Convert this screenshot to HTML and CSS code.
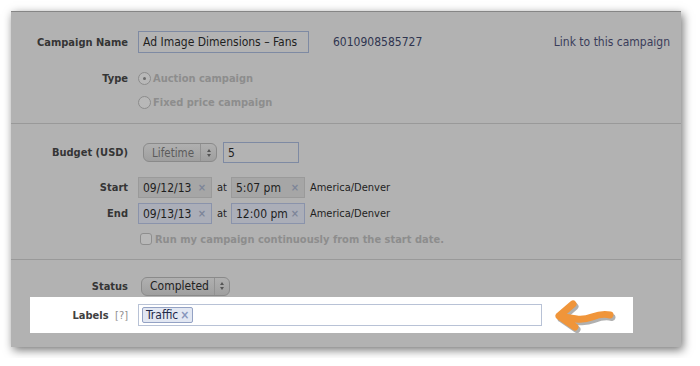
FILE: index.html
```html
<!DOCTYPE html>
<html lang="en">
<head>
    <meta charset="UTF-8">
    <title>Campaign settings</title>
    <link rel="stylesheet" href="styles.css">
</head>
<body>
    <div class="panel">
        <section class="group group-top">
            <div class="row row-name">
                <span class="lbl">Campaign Name</span>
                <div class="field name-field">Ad Image Dimensions – Fans</div>
                <span class="campaign-id">6010908585727</span>
                <a class="campaign-link">Link to this campaign</a>
            </div>
            <div class="row row-radio first-radio">
                <span class="lbl">Type</span>
                <span class="radio checked"></span>
                <span class="muted">Auction campaign</span>
            </div>
            <div class="row row-radio second-radio">
                <span class="lbl"></span>
                <span class="radio"></span>
                <span class="muted">Fixed price campaign</span>
            </div>
        </section>

        <section class="group group-dates">
            <div class="row row-budget">
                <span class="lbl">Budget (USD)</span>
                <div class="select select-budget">
                    <span class="select-text">Lifetime</span>
                    <span class="select-arrows"><i class="up"></i><i class="down"></i></span>
                </div>
                <div class="field budget-field">5</div>
            </div>
            <div class="row row-date start-row">
                <span class="lbl">Start</span>
                <div class="chip date-chip">09/12/13 <span class="x">×</span></div>
                <span class="at">at</span>
                <div class="chip time-chip">5:07 pm <span class="x">×</span></div>
                <span class="tz">America/Denver</span>
            </div>
            <div class="row row-date end-row">
                <span class="lbl">End</span>
                <div class="chip date-chip blue">09/13/13 <span class="x">×</span></div>
                <span class="at">at</span>
                <div class="chip time-chip blue">12:00 pm <span class="x">×</span></div>
                <span class="tz">America/Denver</span>
            </div>
            <div class="row row-check">
                <span class="lbl"></span>
                <span class="checkbox"></span>
                <span class="muted">Run my campaign continuously from the start date.</span>
            </div>
        </section>

        <section class="group group-status">
            <div class="row row-status">
                <span class="lbl">Status</span>
                <div class="select select-status">
                    <span class="select-text">Completed</span>
                    <span class="select-arrows"><i class="up"></i><i class="down"></i></span>
                </div>
            </div>
            <div class="highlight">
                <span class="lbl lbl-labels">Labels <span class="help">[?]</span></span>
                <div class="field labels-field">
                    <span class="tag">Traffic<span class="tag-x">×</span></span>
                </div>
                <svg class="arrow" width="62" height="36" viewBox="0 0 62 36">
                    <g fill="none" stroke-linecap="round" stroke-linejoin="round" stroke-width="7">
                        <path d="M19 7 L5 19 L21 30 M5 19 C20 22 28 24 38 20 C46 17 52 17 56 18" stroke="#6f6f6f" opacity="0.55" transform="translate(2 2.5)"/>
                        <path d="M19 7 L5 19 L21 30 M5 19 C20 22 28 24 38 20 C46 17 52 17 56 18" stroke="#f0953a"/>
                    </g>
                </svg>
            </div>
        </section>
    </div>
</body>
</html>
```

FILE: styles.css
```css
body {
    margin: 0;
    padding: 11px;
    background: #ffffff;
    font-family: "DejaVu Sans Condensed", "DejaVu Sans", sans-serif;
    font-size: 11px;
    color: #333333;
    white-space: nowrap;
}
.panel {
    width: 670px;
    height: 335px;
    background: #b2b2b2;
    border-top: 1px solid #858585;
    box-shadow: 2px 3px 9px rgba(0, 0, 0, 0.55);
}
.group {
    border-bottom: 1px solid #999999;
}
.group-top {
    padding: 19px 0 11px;
}
.group-dates {
    padding: 18px 0 13px;
}
.group-status {
    border-bottom: none;
    padding: 17px 0 0;
}
.row {
    display: flex;
    align-items: center;
}
.lbl {
    width: 117px;
    margin-right: 10px;
    text-align: right;
    font-weight: bold;
    color: #353535;
    flex-shrink: 0;
}
.muted {
    font-weight: bold;
    color: #8d8d8d;
}
.field {
    box-sizing: border-box;
    border: 1px solid #7e8aa3;
    background: #b3b3b3;
    font-size: 12px;
    color: #1e1e1e;
    display: flex;
    align-items: center;
    padding: 0 4px;
}

/* top group */
.row-name {
    height: 22px;
}
.name-field {
    width: 171px;
    height: 22px;
}
.campaign-id {
    margin-left: 24px;
    color: #2f3550;
    font-size: 12px;
}
.campaign-link {
    margin-left: auto;
    margin-right: 11px;
    color: #3a3d5a;
    font-size: 12px;
}
.row-radio {
    height: 20px;
}
.first-radio {
    margin-top: 15px;
}
.second-radio {
    margin-top: 4px;
}
.radio {
    box-sizing: border-box;
    width: 13px;
    height: 13px;
    border: 1px solid #8c8c8c;
    border-radius: 50%;
    background: #b8b8b8;
    margin-right: 2px;
    position: relative;
}
.radio.checked::after {
    content: "";
    position: absolute;
    left: 4px;
    top: 4px;
    width: 3px;
    height: 3px;
    border-radius: 50%;
    background: #6a6a6a;
}

/* dates group */
.row-budget {
    height: 21px;
}
.select {
    box-sizing: border-box;
    display: flex;
    align-items: center;
    height: 19px;
    border: 1px solid #8a8a8a;
    border-radius: 6px;
    background: linear-gradient(#b0b0b0, #9f9f9f);
}
.select-text {
    padding: 0 6px 0 8px;
    border-right: 1px solid #929292;
    height: 100%;
    display: flex;
    align-items: center;
}
.select-arrows {
    width: 15px;
    display: flex;
    flex-direction: column;
    align-items: center;
    gap: 2px;
}
.select-arrows i {
    width: 0;
    height: 0;
    border-left: 2.5px solid transparent;
    border-right: 2.5px solid transparent;
}
.select-arrows .up {
    border-bottom: 3px solid #555555;
}
.select-arrows .down {
    border-top: 3px solid #555555;
}
.select-budget {
    margin-left: 5px;
    width: 74px;
    color: #5b5b5b;
    font-size: 11.5px;
}
.select-budget .select-text {
    width: 57px;
    box-sizing: border-box;
}
.budget-field {
    margin-left: 6px;
    width: 76px;
    height: 21px;
}
.row-date {
    height: 21px;
}
.start-row {
    margin-top: 14px;
}
.end-row {
    margin-top: 5px;
}
.chip {
    box-sizing: border-box;
    height: 21px;
    display: flex;
    align-items: center;
    justify-content: space-between;
    padding: 0 5px 0 4px;
    background: #a6a6a6;
    border: 1px solid #9a9a9a;
    font-size: 12px;
    color: #1e1e1e;
}
.chip.blue {
    background: #abaeb8;
    border-color: #8a93ab;
}
.x {
    color: #7d8598;
    font-weight: bold;
    font-size: 11px;
}
.date-chip {
    width: 74px;
}
.time-chip {
    width: 74px;
}
.at {
    margin: 0 4px 0 5px;
    color: #222222;
}
.tz {
    margin-left: 5px;
    color: #1e1e1e;
}
.row-check {
    height: 14px;
    margin-top: 8px;
}
.checkbox {
    box-sizing: border-box;
    width: 12px;
    height: 12px;
    border: 1px solid #8e8e8e;
    border-radius: 3px;
    background: #b8b8b8;
    margin: 0 3px 0 2px;
}

/* status group */
.row-status {
    height: 18px;
}
.select-status {
    margin-left: 3px;
    width: 89px;
    height: 19px;
    color: #222222;
    font-size: 12px;
}
.select-status .select-text {
    width: 73px;
    box-sizing: border-box;
}
.highlight {
    margin: 2px 0 0 19px;
    width: 603px;
    height: 36px;
    background: #ffffff;
    display: flex;
    align-items: center;
}
.lbl-labels {
    width: 98px;
    color: #3f3f3f;
}
.help {
    font-weight: normal;
    color: #8f8f8f;
    margin-left: 3px;
}
.labels-field {
    width: 404px;
    height: 22px;
    background: #ffffff;
    border-color: #b8c2d6;
    padding: 0 3px;
}
.tag {
    box-sizing: border-box;
    height: 16px;
    display: flex;
    align-items: center;
    padding: 0 3px 0 3px;
    background: #e2e7f2;
    border: 1px solid #94a2c4;
    border-radius: 2px;
    color: #1f2a4a;
    font-size: 12px;
}
.tag-x {
    color: #8795bb;
    font-weight: bold;
    margin-left: 2px;
}
.arrow {
    margin-left: 12px;
}
```
